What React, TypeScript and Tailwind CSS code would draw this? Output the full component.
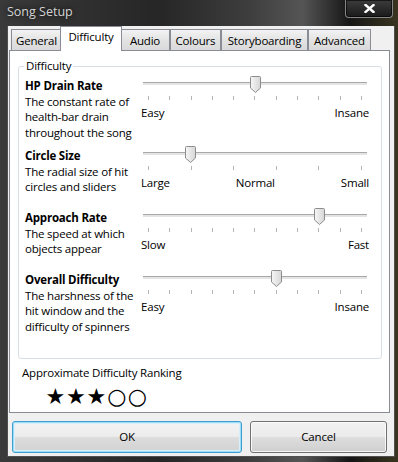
import React from "react";

const tabs: { name: string; w: number }[] = [
  { name: "General", w: 51 },
  { name: "Difficulty", w: 62 },
  { name: "Audio", w: 50 },
  { name: "Colours", w: 51 },
  { name: "Storyboarding", w: 87 },
  { name: "Advanced", w: 63 },
];

function Thumb({ left }: { left: number }) {
  return (
    <svg
      className="absolute top-0"
      style={{ left }}
      width="11"
      height="17"
      viewBox="0 0 11 17"
    >
      <defs>
        <linearGradient id="tg" x1="0" y1="0" x2="1" y2="0">
          <stop offset="0" stopColor="#f6f6f6" />
          <stop offset="1" stopColor="#d6d6d6" />
        </linearGradient>
      </defs>
      <path
        d="M1.5 0.5 H9.5 Q10.5 0.5 10.5 1.5 V12 L5.5 16.5 L0.5 12 V1.5 Q0.5 0.5 1.5 0.5 Z"
        fill="url(#tg)"
        stroke="#8c8c8c"
      />
    </svg>
  );
}

function Slider({
  ticks,
  value,
  labels,
}: {
  ticks: number;
  value: number;
  labels: string[];
}) {
  const step = 214 / (ticks - 1);
  const center = 7 + value * step;
  return (
    <div className="w-[228px] -mt-[2px] flex flex-col">
      <div className="relative h-[17px] pt-[6px]">
        <div className="mx-[2px] h-[3px] border-t border-[#a8a8a8] bg-[#e4e4e4]" />
        <Thumb left={Math.round(center - 5.5)} />
      </div>
      <div className="flex justify-between px-[7px] mt-[3px] h-[4px]">
        {Array.from({ length: ticks }).map((_, i) => (
          <div key={i} className="w-px h-[4px] bg-[#b4b4b4]" />
        ))}
      </div>
      <div className="flex justify-between mt-[5px] leading-[16px]">
        {labels.map((l) => (
          <span key={l}>{l}</span>
        ))}
      </div>
    </div>
  );
}

function Row({
  title,
  lines,
  h,
  slider,
}: {
  title: string;
  lines: string[];
  h: string;
  slider: React.ReactNode;
}) {
  return (
    <div className={`flex ${h}`}>
      <div className="w-[116px] leading-[15.5px] whitespace-nowrap">
        <div className="font-bold">{title}</div>
        {lines.map((l) => (
          <div key={l}>{l}</div>
        ))}
      </div>
      {slider}
    </div>
  );
}

export default function App() {
  return (
    <div className="w-[398px] h-[462px] flex flex-col overflow-hidden bg-[linear-gradient(90deg,#3a3a3a_0%,#262626_40%,#3d3d3d_62%,#555555_76%,#151515_88%,#3a3520_100%)] font-['Open_Sans',sans-serif] text-[11.5px] tracking-[-0.2px] text-black">
      {/* Title bar */}
      <div className="relative h-[26px] shrink-0 flex items-center pl-[7px] pb-[1px]">
        <span className="text-[#d4d4d4] text-[12.5px] tracking-normal [text-shadow:0_0_6px_rgba(0,0,0,0.9)]">
          Song Setup
        </span>
        <div className="absolute right-[5px] top-0 w-[48px] h-[18px] rounded-b-[4px] border border-t-0 border-[#858585] bg-[linear-gradient(180deg,#3c3c3c,#1a1a1a)] shadow-[inset_0_0_0_1px_rgba(0,0,0,0.6)] flex items-center justify-center">
          <svg width="11" height="9" viewBox="0 0 11 9">
            <path
              d="M1.5 1 L9.5 8 M9.5 1 L1.5 8"
              stroke="#ffffff"
              strokeWidth="2.4"
              strokeLinecap="square"
            />
          </svg>
        </div>
      </div>

      {/* Client area */}
      <div className="ml-[7px] mr-[3px] mb-[5px] flex-1 flex flex-col border-l border-r border-b border-[#505050] bg-[#f0f0f0]">
        {/* Tabs */}
        <div className="flex items-end pl-[3px] pt-[1px] h-[24px]">
          {tabs.map((t) => {
            const sel = t.name === "Difficulty";
            return sel ? (
              <div
                key={t.name}
                className="relative z-10 -mx-[2px] -mb-[1px] h-[25px] border border-b-0 border-[#898c95] bg-white flex items-start justify-center pt-[2px] leading-[16px]"
                style={{ width: t.w }}
              >
                {t.name}
              </div>
            ) : (
              <div
                key={t.name}
                className="h-[21px] border border-b-0 border-[#898c95] bg-[linear-gradient(180deg,#f3f3f3,#e3e3e3_50%,#d9d9d9)] flex items-start justify-center pt-[3px] leading-[16px]"
                style={{ width: t.w }}
              >
                {t.name}
              </div>
            );
          })}
        </div>

        {/* Tab panel */}
        <div className="ml-[1px] w-[381px] h-[363px] border border-[#898c95] bg-white flex flex-col pt-[15px] pl-[8px]">
          <div className="relative w-[364px] h-[293px] rounded-[3px] border border-[#d5dfe5] pl-[6px] pt-[11px]">
            <div className="absolute left-[5px] -top-[9px] px-[2px] bg-white leading-[16px]">
              Difficulty
            </div>
            <Row
              h="h-[70px]"
              title="HP Drain Rate"
              lines={["The constant rate of", "health-bar drain", "throughout the song"]}
              slider={<Slider ticks={11} value={5} labels={["Easy", "Insane"]} />}
            />
            <Row
              h="h-[62px]"
              title="Circle Size"
              lines={["The radial size of hit", "circles and sliders"]}
              slider={<Slider ticks={6} value={1} labels={["Large", "Normal", "Small"]} />}
            />
            <Row
              h="h-[62px]"
              title="Approach Rate"
              lines={["The speed at which", "objects appear"]}
              slider={<Slider ticks={11} value={8} labels={["Slow", "Fast"]} />}
            />
            <Row
              h="h-[62px]"
              title="Overall Difficulty"
              lines={["The harshness of the", "hit window and the", "difficulty of spinners"]}
              slider={<Slider ticks={11} value={6} labels={["Easy", "Insane"]} />}
            />
          </div>
          <div className="ml-[4px] mt-[6px] leading-[16px]">
            Approximate Difficulty Ranking
          </div>
          <div className="ml-[27px] mt-[4px] h-[24px] flex items-center font-['DejaVu_Sans',sans-serif] text-[22px] leading-[24px] tracking-normal">
            {["★", "★", "★", "○", "○"].map((c, i) => (
              <span key={i} className="w-[20.5px] text-center font-bold">
                {c}
              </span>
            ))}
          </div>
        </div>

        {/* Buttons */}
        <div className="flex gap-[8px] ml-[4px] mt-[8px]">
          <button className="w-[230px] h-[32px] rounded-[3px] border border-[#3c9fd0] bg-[linear-gradient(180deg,#f4f4f4,#ececec_48%,#dcdcdc_52%,#d2d2d2)] shadow-[inset_0_0_0_1px_#9fdcf6,inset_0_0_0_2px_#d8f0fb] flex items-center justify-center">
            OK
          </button>
          <button className="w-[137px] h-[32px] rounded-[3px] border border-[#707070] bg-[linear-gradient(180deg,#f2f2f2,#ebebeb_48%,#dddddd_52%,#cfcfcf)] shadow-[inset_0_0_0_1px_rgba(255,255,255,0.8)] flex items-center justify-center">
            Cancel
          </button>
        </div>
      </div>
    </div>
  );
}
